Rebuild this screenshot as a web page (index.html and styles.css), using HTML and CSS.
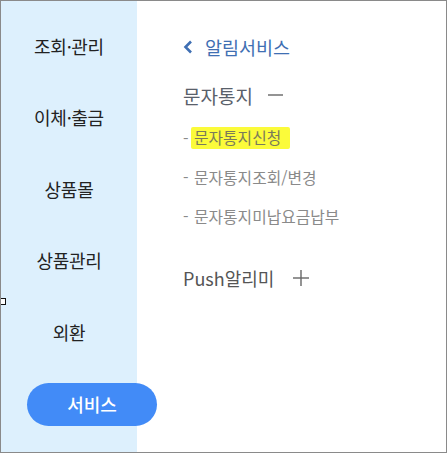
FILE: index.html
```html
<!DOCTYPE html>
<html lang="ko">
<head>
<meta charset="utf-8">
<link rel="stylesheet" href="styles.css">
</head>
<body>
<div class="frame">
  <nav class="side">
    <div class="side-item">조회·관리</div>
    <div class="side-item">이체·출금</div>
    <div class="side-item">상품몰</div>
    <div class="side-item">상품관리</div>
    <div class="side-item">외환</div>
    <div class="side-btn">서비스</div>
  </nav>
  <main class="content">
    <div class="title">
      <svg class="chev" width="10" height="14" viewBox="0 0 10 14"><polyline points="8,1.5 2.5,7 8,12.5" fill="none" stroke="#3f6fb3" stroke-width="2.6" stroke-linejoin="miter"/></svg>
      <span>알림서비스</span>
    </div>
    <div class="group open">
      <span>문자통지</span>
      <svg class="sign" width="16" height="16" viewBox="0 0 16 16"><line x1="0" y1="8" x2="15" y2="8" stroke="#666" stroke-width="1.4"/></svg>
    </div>
    <ul class="sub">
      <li class="sub-item first"><span class="dash">-</span><span class="mark">문자통지신청</span></li>
      <li class="sub-item second"><span class="dash">-</span><span>문자통지조회/변경</span></li>
      <li class="sub-item third"><span class="dash">-</span><span>문자통지미납요금납부</span></li>
    </ul>
    <div class="group push">
      <span>Push알리미</span>
      <svg class="sign plus" width="16" height="16" viewBox="0 0 16 16"><line x1="0" y1="8" x2="16" y2="8" stroke="#666" stroke-width="1.4"/><line x1="8" y1="0" x2="8" y2="16" stroke="#666" stroke-width="1.4"/></svg>
    </div>
  </main>
  <div class="handle"></div>
</div>
</body>
</html>
```
FILE: styles.css
```css
* { box-sizing: border-box; }
html, body { margin: 0; padding: 0; background: #fff; }
body {
  font-family: "Noto Sans CJK KR", "Noto Sans", sans-serif;
}
.frame {
  position: relative;
  width: 447px;
  height: 453px;
  border: 1px solid #8a8a8a;
  display: flex;
  overflow: hidden;
}
.side {
  width: 136px;
  flex: none;
  background: #ddf0fd;
  padding-top: 9px;
  display: flex;
  flex-direction: column;
  position: relative;
  z-index: 1;
}
.side-item {
  height: 71.5px;
  display: flex;
  align-items: center;
  justify-content: center;
  font-size: 18px;
  color: #222;
  letter-spacing: -0.3px;
}
.side-btn {
  margin-top: 15px;
  margin-left: 26px;
  width: 130px;
  height: 43px;
  border-radius: 22px;
  background: #428bf7;
  color: #fff;
  font-size: 18px;
  font-weight: 500;
  display: flex;
  align-items: center;
  justify-content: center;
}
.content {
  flex: 1;
  padding-left: 46px;
  padding-top: 33px;
  display: flex;
  flex-direction: column;
}
.title {
  display: flex;
  align-items: center;
  height: 26px;
  font-size: 18.5px;
  color: #3f6fb3;
}
.chev { margin-right: 12px; }
.group {
  display: flex;
  align-items: center;
  height: 26px;
  font-size: 19px;
  color: #59606a;
}
.group.open { margin-top: 22px; }
.group.open .sign { margin-left: 15px; }
.sub {
  list-style: none;
  margin: 0;
  padding: 0;
}
.sub-item {
  display: flex;
  align-items: center;
  height: 22px;
  font-size: 15.8px;
  color: #8a8a8a;
}
.sub-item.first { margin-top: 19px; }
.sub-item.second { margin-top: 17px; }
.sub-item.third { margin-top: 17px; }
.dash { width: 11px; }
.mark {
  background: #fbfb3a;
  color: #7a7a5a;
  margin-left: -3px;
  padding: 0 9px 0 3px;
  line-height: 22px;
  border-radius: 2px;
}
.group.push { margin-top: 38px; color: #555; font-size: 18px; }
.group.push .sign { margin-left: 19px; }
.handle {
  position: absolute;
  left: -1px;
  top: 297px;
  width: 6px;
  height: 7px;
  border: 1px solid #111;
  background: #fff;
  z-index: 3;
}
```
